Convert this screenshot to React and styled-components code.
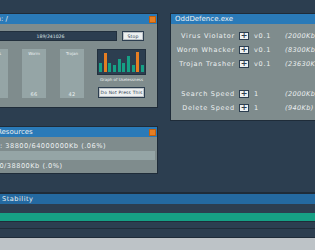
import React from "react";
import styled, { createGlobalStyle } from "styled-components";

const Global = createGlobalStyle`
  html, body { margin: 0; padding: 0; background: #2c3e50; overflow: hidden; }
  * { box-sizing: border-box; }
`;

const Screen = styled.div`
  width: 315px;
  height: 250px;
  display: flex;
  flex-direction: column;
  font-family: "DejaVu Sans", "Liberation Sans", sans-serif;
  color: #ecf0f1;
  overflow: hidden;
`;

const Desktop = styled.div`
  position: relative;
  height: 192px;
  flex: none;
`;

const Window = styled.div`
  position: absolute;
  left: ${(p) => p.$x}px;
  top: ${(p) => p.$y}px;
  width: ${(p) => p.$w}px;
  height: ${(p) => p.$h}px;
  background: #7f8c8d;
  border: 1px solid #1f2c39;
  display: flex;
  flex-direction: column;
`;

const TitleBar = styled.div`
  height: 10px;
  flex: none;
  background: #2a7ab8;
  display: flex;
  align-items: center;
  justify-content: space-between;
  padding: 0 1px 0 ${(p) => p.$pl || 4}px;
  font-size: 7px;
  color: #ecf0f1;
  line-height: 1;
  white-space: nowrap;
`;

const Close = styled.div`
  width: 7px;
  height: 7px;
  background: #e67e22;
  border: 1px solid #c0600f;
`;

const Body = styled.div`
  flex: 1;
  display: flex;
  flex-direction: column;
  padding: ${(p) => p.$pad};
  gap: ${(p) => p.$gap || 0}px;
`;

const Row = styled.div`
  display: flex;
  gap: ${(p) => p.$gap || 0}px;
  height: ${(p) => p.$h}px;
`;

const Progress = styled.div`
  width: 133px;
  background: #2c3e50;
  border: 1px solid #22303d;
  display: flex;
  align-items: center;
  justify-content: center;
  font-size: 4.6px;
  color: #dfe6e9;
`;

const Button = styled.div`
  width: ${(p) => p.$w}px;
  height: ${(p) => p.$h}px;
  background: #ecf0f1;
  border: 1px solid #2c3e50;
  box-shadow: inset 0 0 0 1px #bdc3c7;
  color: #2c3e50;
  display: flex;
  align-items: center;
  justify-content: center;
  font-size: ${(p) => p.$fs}px;
  letter-spacing: 0.2px;
  white-space: nowrap;
`;

const Bars = styled.div`
  display: grid;
  grid-template-columns: repeat(3, 24px);
  gap: 14px;
  height: 49px;
`;

const Bar = styled.div`
  background: #95a5a6;
  display: flex;
  flex-direction: column;
  justify-content: space-between;
  align-items: center;
  padding: 2px 0 1px;
  color: #ecf0f1;
`;

const BarLabel = styled.span`
  font-size: 4px;
`;

const BarValue = styled.span`
  font-size: 5px;
  letter-spacing: 0.3px;
`;

const GraphCol = styled.div`
  width: 49px;
  display: flex;
  flex-direction: column;
  align-items: center;
`;

const Graph = styled.div`
  width: 49px;
  height: 27px;
  background: #2c3e50;
  border: 1px solid #22303d;
  display: flex;
  align-items: flex-end;
  justify-content: center;
  gap: 1.7px;
  padding-bottom: 2px;
`;

const GraphBar = styled.div`
  width: 3px;
  background: ${(p) => (p.$hot ? "#e67e22" : "#16a085")};
`;

const GraphLabel = styled.div`
  font-size: 4px;
  margin: 2px 0 5px;
  white-space: nowrap;
  color: #ecf0f1;
`;

const UpgradeGrid = styled.div`
  display: grid;
  grid-template-columns: 62px 10px 26px auto;
  grid-template-rows: 14px 14px 14px 16px 14px 14px;
  column-gap: 5px;
  align-items: center;
  font-size: 6.5px;
  letter-spacing: 0.75px;
  white-space: nowrap;
`;

const Label = styled.span`
  text-align: right;
  margin-right: -1px;
`;

const Plus = styled.div`
  width: 10px;
  height: 8px;
  background: #ecf0f1;
  border: 1px solid #2c3e50;
  color: #2c3e50;
  display: flex;
  align-items: center;
  justify-content: center;
  font-size: 8px;
  font-weight: bold;
  letter-spacing: 0;
  line-height: 1;
`;

const Cost = styled.span`
  font-style: italic;
  letter-spacing: 0.4px;
`;

const Spacer = styled.div`
  grid-column: 1 / -1;
`;

const ResText = styled.div`
  font-size: 6.6px;
  letter-spacing: 0.5px;
  white-space: nowrap;
  height: ${(p) => p.$h}px;
  display: flex;
  align-items: center;
`;

const ResBar = styled.div`
  height: 9px;
  background: #95a5a6;
  margin-right: 2px;
`;

const Stability = styled.div`
  flex: 1;
  border-top: 2px solid #1f2c39;
  display: flex;
  flex-direction: column;
`;

const StabTitle = styled.div`
  height: 10px;
  background: #2469a0;
  font-size: 6.6px;
  letter-spacing: 0.5px;
  padding-left: 2px;
  display: flex;
  align-items: center;
`;

const StabBody = styled.div`
  display: flex;
  flex-direction: column;
  padding-top: 9px;
`;

const StabBar = styled.div`
  height: 9px;
  background: #16a085;
  border-bottom: 1px solid #1f2c39;
`;

const Strip = styled.div`
  height: ${(p) => p.$h}px;
  border-bottom: 1px solid #1f2c39;
`;

const Floor = styled.div`
  flex: 1;
  background: #bdc3c7;
`;

const graph = [
  [9, 0], [19, 1], [9, 0], [7, 0], [13, 0], [9, 0], [16, 0], [7, 0], [20, 1], [7, 0],
];

const upgrades = [
  ["Virus Violator", "v0.1", "(2000Kb)"],
  ["Worm Whacker", "v0.1", "(8300Kb)"],
  ["Trojan Trasher", "v0.1", "(23630Kb)"],
];
const speeds = [
  ["Search Speed", "1", "(2000Kb)"],
  ["Delete Speed", "1", "(940Kb)"],
];

const UpRow = ({ r }) => (
  <>
    <Label>{r[0]}</Label>
    <Plus>+</Plus>
    <span>{r[1]}</span>
    <Cost>{r[2]}</Cost>
  </>
);

export default function App() {
  return (
    <Screen>
      <Global />
      <Desktop>
        <Window $x={-23} $y={13} $w={181} $h={95}>
          <TitleBar $pl={6}>
            <span>Scan: /</span>
            <Close />
          </TitleBar>
          <Body $pad="7px 6px 0 6px" $gap={8}>
            <Row $h={10} $gap={5}>
              <Progress>189/241026</Progress>
              <Button $w={22} $h={10} $fs={4.6}>Stop</Button>
            </Row>
            <Row $h={49} $gap={13}>
              <Bars>
                <Bar><BarLabel>Virus</BarLabel><BarValue>91</BarValue></Bar>
                <Bar><BarLabel>Worm</BarLabel><BarValue>66</BarValue></Bar>
                <Bar><BarLabel>Trojan</BarLabel><BarValue>42</BarValue></Bar>
              </Bars>
              <GraphCol>
                <Graph>
                  {graph.map(([h, hot], i) => (
                    <GraphBar key={i} $hot={hot} style={{ height: h }} />
                  ))}
                </Graph>
                <GraphLabel>Graph of Uselessness</GraphLabel>
                <Button $w={47} $h={12} $fs={4.4}>Do Not Press This</Button>
              </GraphCol>
            </Row>
          </Body>
        </Window>

        <Window $x={170} $y={13} $w={160} $h={108}>
          <TitleBar>
            <span>OddDefence.exe</span>
          </TitleBar>
          <Body $pad="5px 0 0 1px">
            <UpgradeGrid>
              {upgrades.map((r) => <UpRow key={r[0]} r={r} />)}
              <Spacer />
              {speeds.map((r) => <UpRow key={r[0]} r={r} />)}
            </UpgradeGrid>
          </Body>
        </Window>

        <Window $x={-37} $y={126} $w={195} $h={48}>
          <TitleBar $pl={33}>
            <span>Resources</span>
            <Close />
          </TitleBar>
          <Body $pad="3px 0 0 4px">
            <ResText $h={11}>Scanned: 38800/64000000Kb (.06%)</ResText>
            <ResBar />
            <ResText $h={11}>Purged: 0/38800Kb (.0%)</ResText>
          </Body>
        </Window>
      </Desktop>

      <Stability>
        <StabTitle>Stability</StabTitle>
        <StabBody>
          <StabBar />
          <Strip $h={7} />
          <Strip $h={9} />
        </StabBody>
        <Floor />
      </Stability>
    </Screen>
  );
}
